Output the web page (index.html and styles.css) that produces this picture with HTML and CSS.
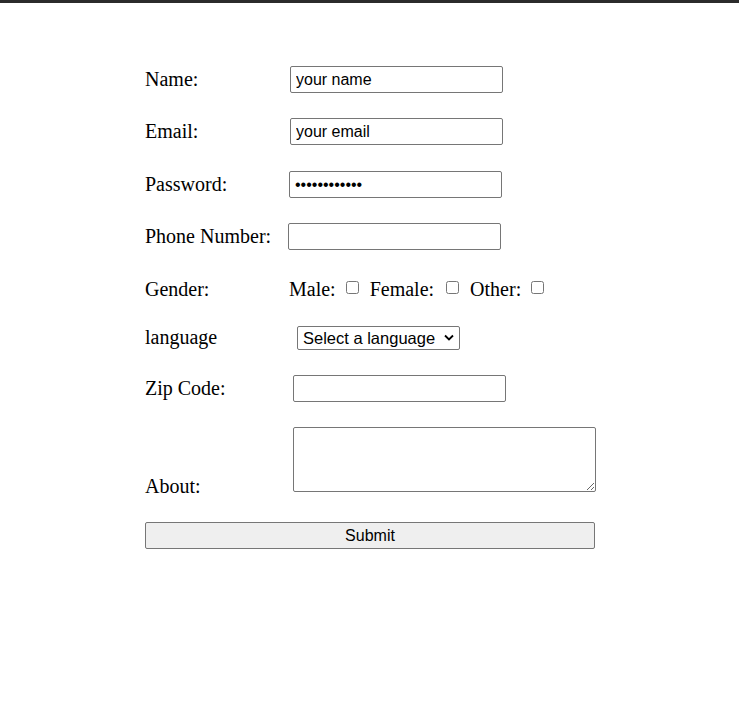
FILE: index.html
```
<!DOCTYPE html>
<html>
<head>
<meta charset="utf-8">
<link rel="stylesheet" href="styles.css">
</head>
<body>
<div class="topbar"></div>
<form class="form">
  <div class="row r-name">
    <label class="lbl">Name:</label>
    <input class="field" type="text" value="your name">
  </div>
  <div class="row r-email">
    <label class="lbl">Email:</label>
    <input class="field" type="text" value="your email">
  </div>
  <div class="row r-pass">
    <label class="lbl">Password:</label>
    <input class="field" type="password" value="abcdefghijkl">
  </div>
  <div class="row r-phone">
    <label class="lbl">Phone Number:</label>
    <input class="field" type="text">
  </div>
  <div class="row r-gender">
    <label class="lbl">Gender:</label>
    <div class="choices">
      <span class="opt">Male:</span><input class="check" type="checkbox">
      <span class="opt opt-wide">Female:</span><input class="check" type="checkbox">
      <span class="opt">Other:</span><input class="check" type="checkbox">
    </div>
  </div>
  <div class="row r-lang">
    <label class="lbl">language</label>
    <select class="sel"><option>Select a language</option></select>
  </div>
  <div class="row r-zip">
    <label class="lbl">Zip Code:</label>
    <input class="field" type="text">
  </div>
  <div class="row r-about">
    <label class="lbl">About:</label>
    <textarea class="area"></textarea>
  </div>
  <button class="submit" type="button">Submit</button>
</form>
</body>
</html>
```
FILE: styles.css
```
html, body {
  margin: 0;
  padding: 0;
  background: #ffffff;
}
body {
  font-family: "Liberation Serif", "Times New Roman", serif;
  font-size: 20px;
  color: #000;
}
.topbar {
  height: 3px;
  background: #2b2b2b;
}
.form {
  display: flex;
  flex-direction: column;
  align-items: flex-start;
  padding: 63px 0 0 145px;
}
.row {
  display: flex;
  align-items: center;
  height: 27px;
}
.lbl {
  width: 145px;
  flex: none;
  line-height: 23px;
}
.field {
  box-sizing: border-box;
  width: 213px;
  height: 27px;
  margin: 0;
  padding: 0 5px;
  border: 1px solid #767676;
  border-radius: 2px;
  font-family: "Liberation Sans", Arial, sans-serif;
  font-size: 16px;
  color: #000;
  background: #fff;
}
.r-email { margin-top: 25px; }
.r-pass { margin-top: 26px; }
.r-pass .field { margin-left: -1px; }
.r-phone { margin-top: 25px; }
.r-phone .field { margin-left: -2px; }
.r-gender { margin-top: 26px; }
.choices {
  display: flex;
  align-items: center;
  margin-left: -1px;
}
.opt {
  line-height: 23px;
}
.opt-wide {
  padding-right: 2px;
}
.check {
  width: 13px;
  height: 13px;
  margin: 0 11px 4px 10px;
}
.r-lang { margin-top: 21px; }
.sel {
  box-sizing: border-box;
  width: 163px;
  height: 24px;
  margin: 0 0 0 7px;
  padding: 0 0 0 5px;
  font-family: "Liberation Sans", Arial, sans-serif;
  font-size: 16.5px;
  color: #000;
  border: 1px solid #767676;
  border-radius: 2px;
  -webkit-appearance: none;
  appearance: none;
  background: #fff url("data:image/svg+xml;utf8,<svg xmlns='http://www.w3.org/2000/svg' width='10' height='7' viewBox='0 0 10 7'><path d='M1 1.5 L5 5.5 L9 1.5' fill='none' stroke='black' stroke-width='1.8'/></svg>") no-repeat right 5px center;
}
.r-zip { margin-top: 24px; }
.r-zip .field { margin-left: 3px; }
.r-about {
  margin-top: 25px;
  height: 65px;
  align-items: flex-end;
}
.r-about .lbl {
  margin-bottom: -6px;
}
.area {
  box-sizing: border-box;
  width: 303px;
  height: 65px;
  margin: 0 0 0 3px;
  border: 1px solid #767676;
  border-radius: 2px;
  padding: 2px;
}
.submit {
  box-sizing: border-box;
  width: 450px;
  height: 27px;
  margin-top: 30px;
  padding: 0;
  background: #efefef;
  border: 1px solid #767676;
  border-radius: 2px;
  font-family: "Liberation Sans", Arial, sans-serif;
  font-size: 16px;
  color: #000;
}
```
